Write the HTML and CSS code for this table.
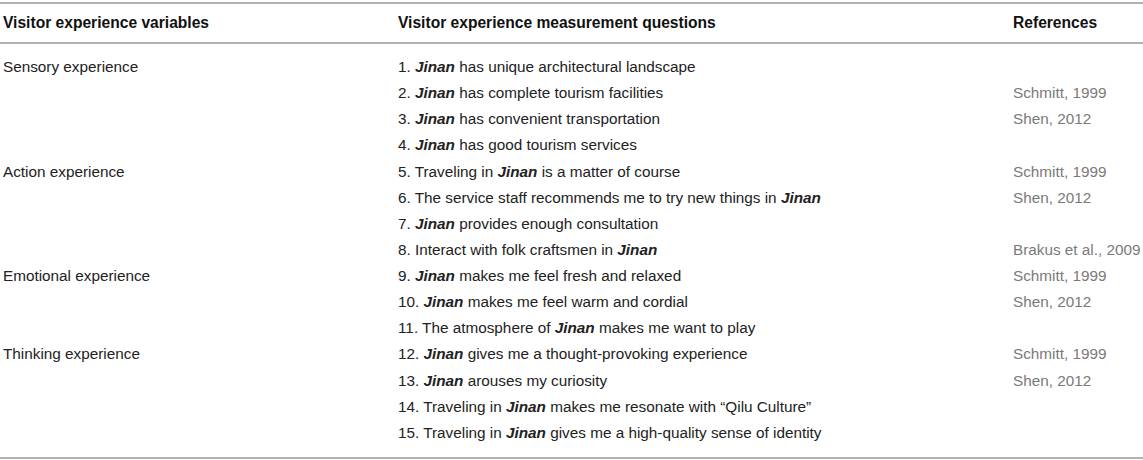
FILE: index.html
```html
<!DOCTYPE html>
<html>
<head>
<meta charset="utf-8">
<link rel="stylesheet" href="styles.css">
</head>
<body>
<table class="tbl">
  <thead>
    <tr>
      <th class="c1">Visitor experience variables</th>
      <th class="c2">Visitor experience measurement questions</th>
      <th class="c3">References</th>
    </tr>
  </thead>
  <tbody>
    <tr class="first"><td class="c1">Sensory experience</td><td class="c2">1. <b><i>Jinan</i></b> has unique architectural landscape</td><td class="c3"></td></tr>
    <tr><td class="c1"></td><td class="c2">2. <b><i>Jinan</i></b> has complete tourism facilities</td><td class="c3">Schmitt, 1999</td></tr>
    <tr><td class="c1"></td><td class="c2">3. <b><i>Jinan</i></b> has convenient transportation</td><td class="c3">Shen, 2012</td></tr>
    <tr><td class="c1"></td><td class="c2">4. <b><i>Jinan</i></b> has good tourism services</td><td class="c3"></td></tr>
    <tr><td class="c1">Action experience</td><td class="c2">5. Traveling in <b><i>Jinan</i></b> is a matter of course</td><td class="c3">Schmitt, 1999</td></tr>
    <tr><td class="c1"></td><td class="c2">6. The service staff recommends me to try new things in <b><i>Jinan</i></b></td><td class="c3">Shen, 2012</td></tr>
    <tr><td class="c1"></td><td class="c2">7. <b><i>Jinan</i></b> provides enough consultation</td><td class="c3"></td></tr>
    <tr><td class="c1"></td><td class="c2">8. Interact with folk craftsmen in <b><i>Jinan</i></b></td><td class="c3">Brakus et al., 2009</td></tr>
    <tr><td class="c1">Emotional experience</td><td class="c2">9. <b><i>Jinan</i></b> makes me feel fresh and relaxed</td><td class="c3">Schmitt, 1999</td></tr>
    <tr><td class="c1"></td><td class="c2">10. <b><i>Jinan</i></b> makes me feel warm and cordial</td><td class="c3">Shen, 2012</td></tr>
    <tr><td class="c1"></td><td class="c2">11. The atmosphere of <b><i>Jinan</i></b> makes me want to play</td><td class="c3"></td></tr>
    <tr><td class="c1">Thinking experience</td><td class="c2">12. <b><i>Jinan</i></b> gives me a thought-provoking experience</td><td class="c3">Schmitt, 1999</td></tr>
    <tr><td class="c1"></td><td class="c2">13. <b><i>Jinan</i></b> arouses my curiosity</td><td class="c3">Shen, 2012</td></tr>
    <tr><td class="c1"></td><td class="c2">14. Traveling in <b><i>Jinan</i></b> makes me resonate with “Qilu Culture”</td><td class="c3"></td></tr>
    <tr class="last"><td class="c1"></td><td class="c2">15. Traveling in <b><i>Jinan</i></b> gives me a high-quality sense of identity</td><td class="c3"></td></tr>
  </tbody>
</table>
</body>
</html>
```

FILE: styles.css
```css
html, body {
  margin: 0;
  padding: 0;
  background: #fff;
}
body {
  padding-top: 2px;
  font-family: "Liberation Sans", Arial, sans-serif;
  font-size: 15.3px;
  color: #222;
}
.tbl {
  width: 100%;
  border-collapse: collapse;
  border-top: 2px solid #b3b3b3;
  border-bottom: 2px solid #b3b3b3;
}
.tbl th {
  text-align: left;
  font-weight: bold;
  font-size: 15.6px;
  height: 38px;
  padding: 0;
  border-bottom: 2px solid #b3b3b3;
  vertical-align: middle;
  color: #111;
}
.tbl td {
  padding: 0;
  height: 26.14px;
  vertical-align: middle;
  white-space: nowrap;
}
.tbl tr.first td { padding-top: 10px; }
.tbl tr.last td { padding-bottom: 11px; }
.tbl .c1 { width: 395px; padding-left: 3px; }
.c2 { width: 615px; }
td.c3 { color: #7a7a7a; }
```
